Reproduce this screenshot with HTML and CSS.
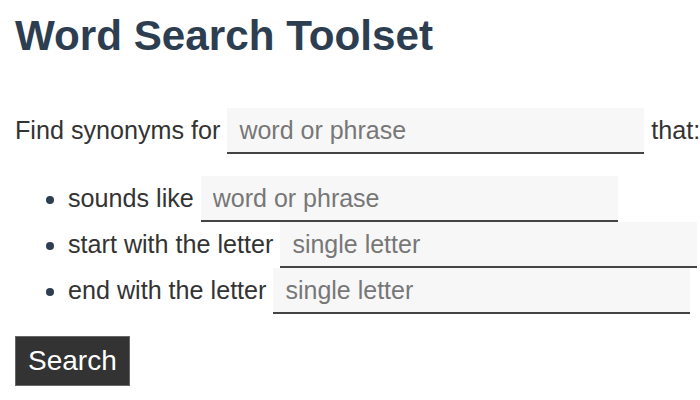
FILE: index.html
```html
<!DOCTYPE html>
<html lang="en">
<head>
<meta charset="utf-8">
<title>Word Search Toolset</title>
<link rel="stylesheet" href="styles.css">
</head>
<body>
<main class="page">
  <h1 class="title">Word Search Toolset</h1>
  <form class="search-form" onsubmit="return false">
    <p class="lead">Find synonyms for <input class="field" type="text" placeholder="word or phrase"> that:</p>
    <ul class="criteria">
      <li>sounds like <input class="field" type="text" placeholder="word or phrase"></li>
      <li>start with the letter <input class="field" type="text" placeholder="single letter"></li>
      <li>end with the letter <input class="field" type="text" placeholder="single letter"></li>
    </ul>
    <button class="btn" type="submit">Search</button>
  </form>
</main>
</body>
</html>
```
FILE: styles.css
```css
html, body {
  margin: 0;
  padding: 0;
  background: #ffffff;
  overflow: hidden;
}
body {
  font-family: "Liberation Sans", Arial, sans-serif;
  color: #333333;
  font-size: 25.15px;
}
.page {
  padding: 0 0 0 15px;
}
.title {
  margin: 12px 0 0 0;
  font-size: 42.2px;
  font-weight: bold;
  color: #2c3e50;
  line-height: normal;
}
.search-form {
  margin: 0;
}
.lead {
  margin: 48px 0 0 0;
  white-space: nowrap;
}
.field {
  font-family: "Liberation Sans", Arial, sans-serif;
  font-size: 25px;
  width: 417px;
  height: 46px;
  box-sizing: border-box;
  padding: 0 12px;
  margin: 0;
  border: none;
  border-bottom: 2px solid #444444;
  background: #f7f7f7;
  color: #333333;
  outline: none;
  border-radius: 0;
}
.field::placeholder {
  color: #777777;
  opacity: 1;
}
.criteria {
  margin: 22px 0 0 0;
  padding: 0 0 0 53px;
}
.criteria li {
  white-space: nowrap;
  color: #333333;
}
.criteria li::marker {
  color: #2c3e50;
}
.btn {
  display: inline-block;
  margin-top: 22px;
  height: 50px;
  padding: 0 12px;
  border: 1px solid #666666;
  background: #333333;
  color: #ffffff;
  font-family: "Liberation Sans", Arial, sans-serif;
  font-size: 28px;
  border-radius: 0;
  cursor: pointer;
}
```
